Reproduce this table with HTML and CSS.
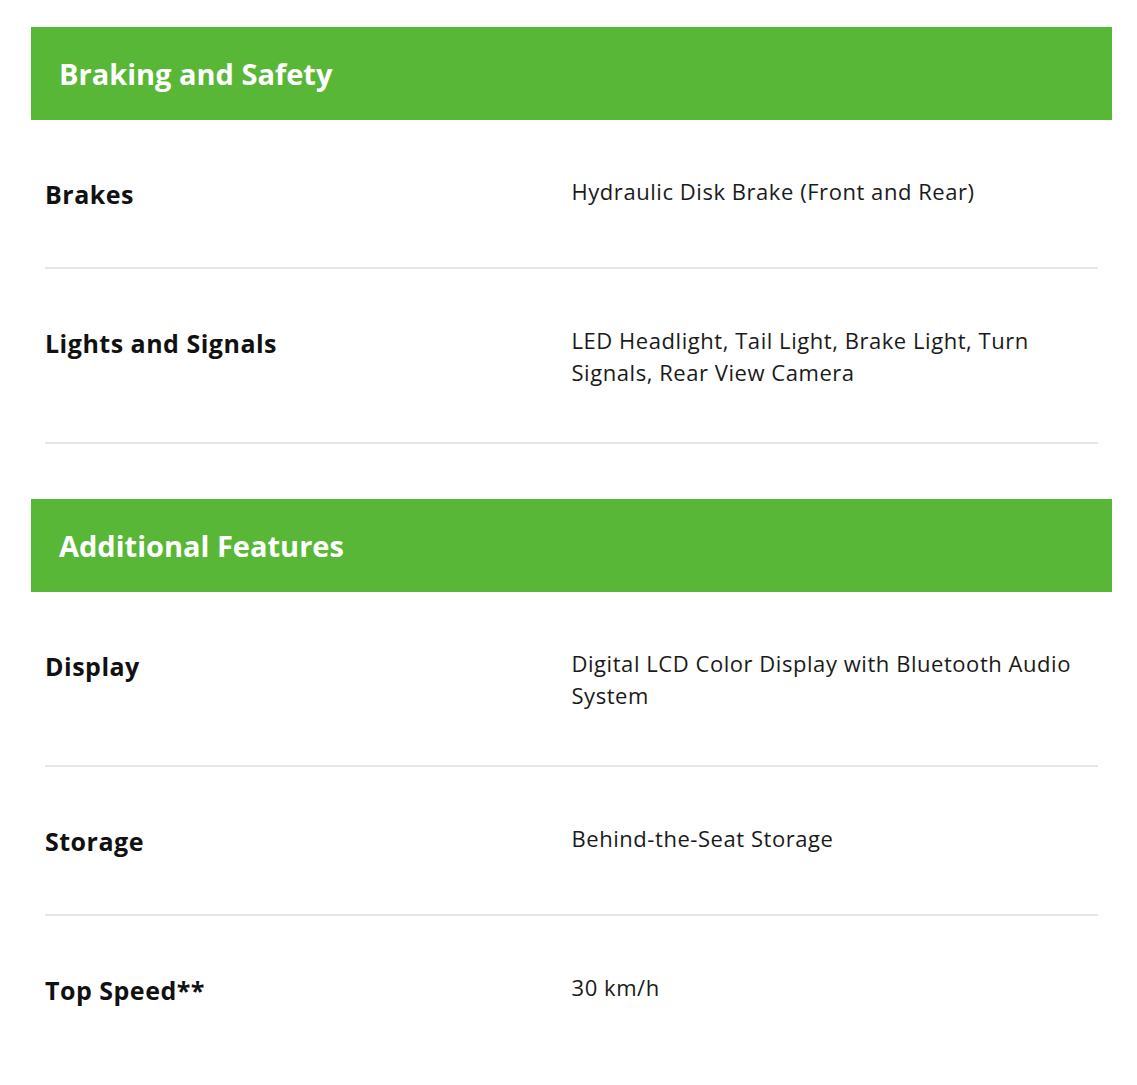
FILE: index.html
```html
<!DOCTYPE html>
<html lang="en">
<head>
    <meta charset="UTF-8">
    <meta name="viewport" content="width=device-width, initial-scale=1.0">
    <title>Specifications</title>
    <link rel="stylesheet" href="styles.css">
</head>
<body>
    <div class="specs">
        <section class="spec-group">
            <h2 class="spec-title">Braking and Safety</h2>
            <div class="spec-list">
                <div class="spec-row">
                    <div class="spec-label">Brakes</div>
                    <div class="spec-value">Hydraulic Disk Brake (Front and Rear)</div>
                </div>
                <div class="spec-row">
                    <div class="spec-label">Lights and Signals</div>
                    <div class="spec-value">LED Headlight, Tail Light, Brake Light, Turn Signals, Rear View Camera</div>
                </div>
            </div>
        </section>

        <section class="spec-group">
            <h2 class="spec-title">Additional Features</h2>
            <div class="spec-list">
                <div class="spec-row">
                    <div class="spec-label">Display</div>
                    <div class="spec-value">Digital LCD Color Display with Bluetooth Audio System</div>
                </div>
                <div class="spec-row">
                    <div class="spec-label">Storage</div>
                    <div class="spec-value">Behind-the-Seat Storage</div>
                </div>
                <div class="spec-row">
                    <div class="spec-label">Top Speed**</div>
                    <div class="spec-value">30 km/h</div>
                </div>
            </div>
        </section>
    </div>
</body>
</html>
```

FILE: styles.css
```css
/* Spec table */
* {
    margin: 0;
    padding: 0;
    box-sizing: border-box;
}

body {
    font-family: 'Open Sans', Lato, Arial, sans-serif;
    background-color: #ffffff;
    color: #111111;
}

.specs {
    padding: 27px 25px 0 31px;
}

.spec-group + .spec-group {
    margin-top: 55px;
}

.spec-title {
    background-color: #59b737;
    color: #ffffff;
    font-size: 29px;
    font-weight: 700;
    line-height: 93px;
    height: 93px;
    padding: 0 28px;
}

.spec-list {
    padding: 0 14px;
}

.spec-row {
    display: grid;
    grid-template-columns: 1fr 1fr;
    padding: 55px 0 54px;
    border-bottom: 2px solid #e6e6e6;
}

.spec-group:last-child .spec-row:last-child {
    border-bottom: none;
}

.spec-label {
    font-size: 25px;
    font-weight: 700;
    line-height: 38px;
    letter-spacing: 0.5px;
    color: #111111;
}

.spec-value {
    font-size: 22px;
    line-height: 32px;
    letter-spacing: 0.55px;
    color: #1a1a1a;
}
```
